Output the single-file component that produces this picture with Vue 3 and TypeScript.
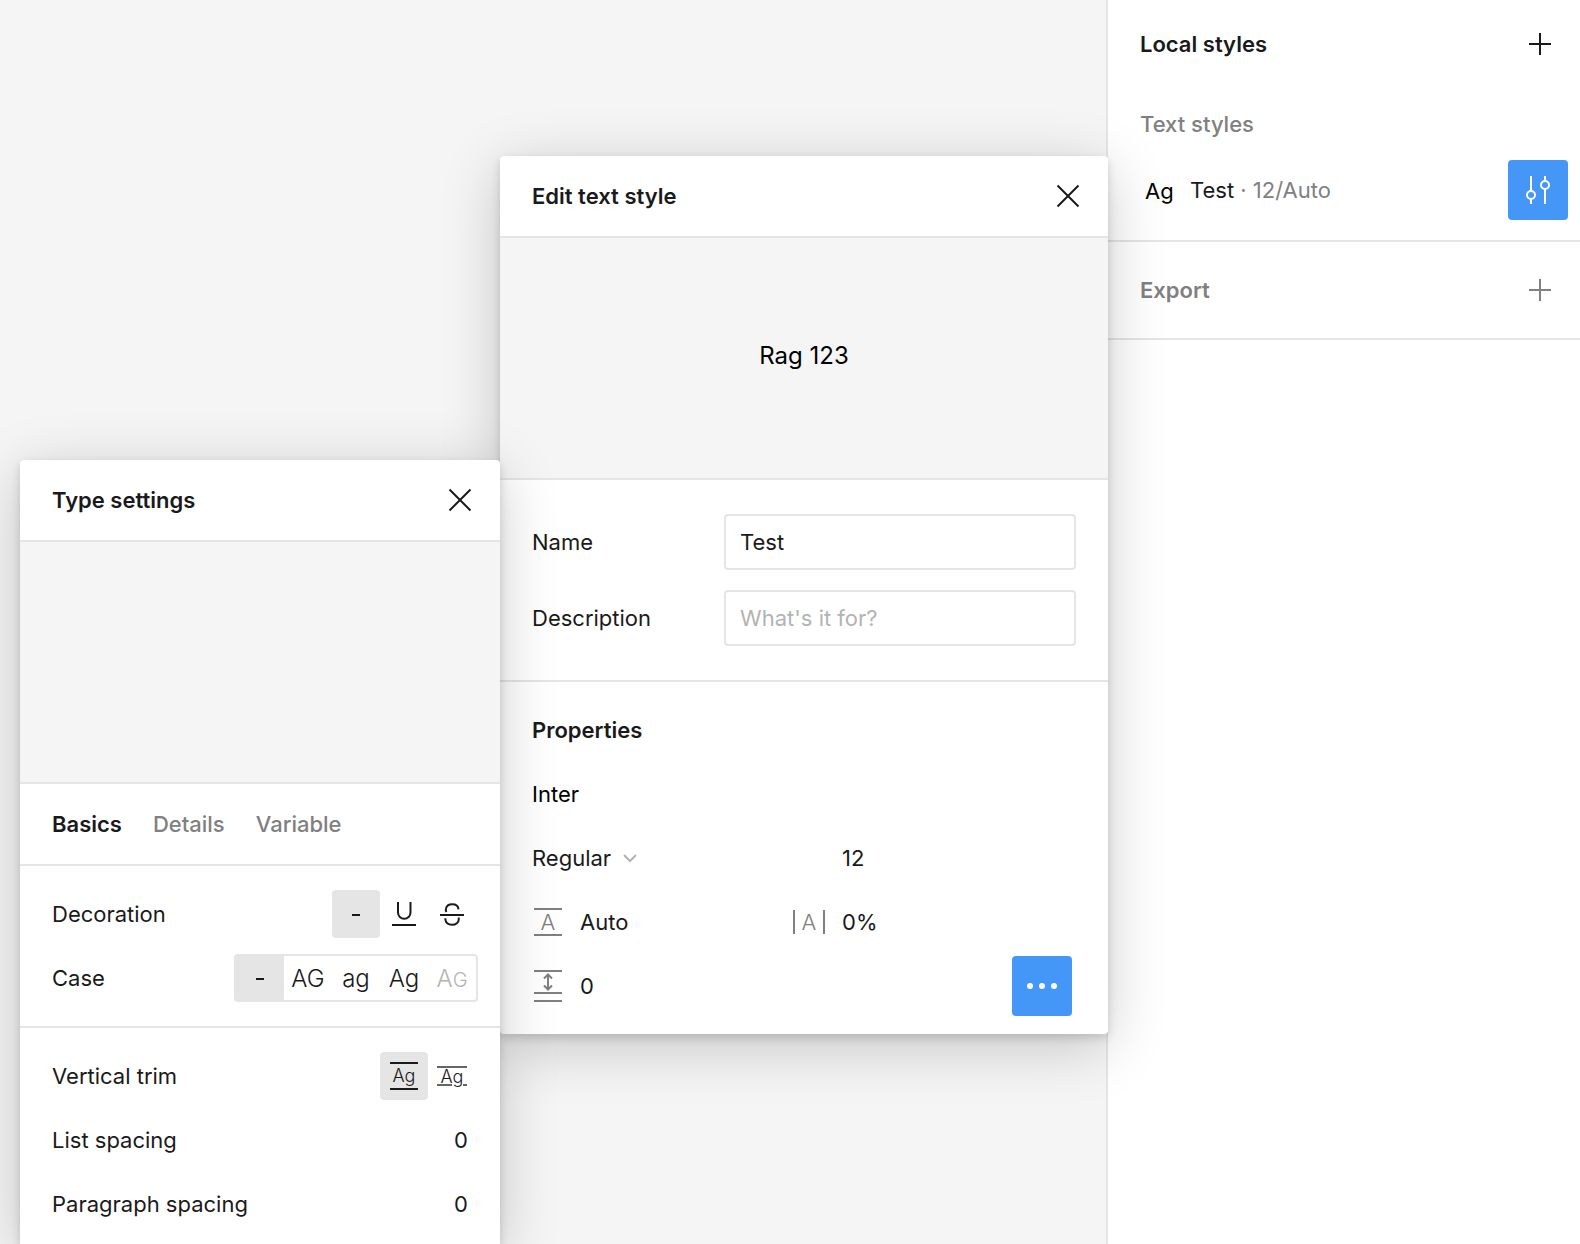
<script setup lang="ts">
import { ref } from 'vue'

type Tab = 'Basics' | 'Details' | 'Variable'

const tabs: Tab[] = ['Basics', 'Details', 'Variable']
const activeTab = ref<Tab>('Basics')

const decoration = ref<'none' | 'underline' | 'strike'>('none')
const textCase = ref<'none' | 'upper' | 'lower' | 'title' | 'small'>('none')
const trim = ref<'standard' | 'cap'>('standard')

const name = ref('Test')
const description = ref('')
const family = ref('Inter')
const weight = ref('Regular')
const size = ref('12')
const lineHeight = ref('Auto')
const letterSpacing = ref('0%')
const paragraphGap = ref('0')
const listSpacing = ref('0')
const paragraphSpacing = ref('0')
</script>

<template>
  <div class="app">
    <main class="canvas"></main>

    <aside class="sidebar">
      <section class="block styles">
        <header class="block-head">
          <h2>Local styles</h2>
          <button class="icon-btn" type="button" aria-label="Create style">
            <svg width="24" height="24" viewBox="0 0 24 24"><path d="M12 1v22M1 12h22" /></svg>
          </button>
        </header>
        <h3 class="sub">Text styles</h3>
        <div class="style-row">
          <span class="sample">Ag</span>
          <span class="style-name">Test <span class="muted">· 12/Auto</span></span>
          <button class="primary" type="button" aria-label="Edit style">
            <svg width="60" height="60" viewBox="0 0 60 60">
              <path d="M23 16v15M23 39v5M37 16v5M37 29v15" />
              <circle cx="23" cy="35" r="4" />
              <circle cx="37" cy="25" r="4" />
            </svg>
          </button>
        </div>
      </section>
      <section class="block export muted">
        <h2>Export</h2>
        <button class="icon-btn" type="button" aria-label="Add export">
          <svg width="24" height="24" viewBox="0 0 24 24"><path d="M12 1v22M1 12h22" /></svg>
        </button>
      </section>
    </aside>

    <section class="panel edit-panel" aria-label="Edit text style">
      <header class="panel-head">
        <h2>Edit text style</h2>
        <button class="icon-btn close" type="button" aria-label="Close">
          <svg width="24" height="24" viewBox="0 0 24 24"><path d="M1.500 1.500l21 21M22.500 1.500l-21 21" /></svg>
        </button>
      </header>
      <div class="preview">Rag 123</div>
      <div class="form">
        <label for="style-name">Name</label>
        <input id="style-name" v-model="name" class="boxed" type="text" />
        <label for="style-desc">Description</label>
        <input id="style-desc" v-model="description" class="boxed" type="text" placeholder="What's it for?" />
      </div>
      <div class="props">
        <h2 class="wide">Properties</h2>
        <input v-model="family" class="plain wide black" type="text" aria-label="Font family" />
        <div class="select-cell">
          <select v-model="weight" aria-label="Font weight">
            <option>Regular</option>
          </select>
          <svg class="chevron" width="16" height="10" viewBox="0 0 16 10"><path d="M2 2l6 6 6-6" /></svg>
        </div>
        <input v-model="size" class="plain" type="text" aria-label="Font size" />

        <svg class="prop-icon" width="32" height="32" viewBox="0 0 32 32">
          <path d="M2 3h28M2 29h28" />
          <text x="16" y="24" text-anchor="middle">A</text>
        </svg>
        <input v-model="lineHeight" class="plain" type="text" aria-label="Line height" />
        <svg class="prop-icon" width="36" height="32" viewBox="0 0 36 32">
          <path d="M4 4v24M34 4v24" />
          <text x="19" y="24" text-anchor="middle">A</text>
        </svg>
        <input v-model="letterSpacing" class="plain" type="text" aria-label="Letter spacing" />

        <svg class="prop-icon" width="32" height="34" viewBox="0 0 32 34">
          <path d="M2 2h28M2 24h28M2 32h28" />
          <path d="M16 6v14M12 9.500l4-4 4 4M12 16.500l4 4 4-4" />
        </svg>
        <input v-model="paragraphGap" class="plain" type="text" aria-label="Paragraph gap" />
        <button class="primary more" type="button" aria-label="Type settings">
          <svg width="60" height="60" viewBox="0 0 60 60">
            <g class="dots">
              <circle cx="18" cy="30" r="3" />
              <circle cx="30" cy="30" r="3" />
              <circle cx="42" cy="30" r="3" />
            </g>
          </svg>
        </button>
      </div>
    </section>

    <section class="panel type-panel" aria-label="Type settings">
      <header class="panel-head">
        <h2>Type settings</h2>
        <button class="icon-btn close" type="button" aria-label="Close">
          <svg width="24" height="24" viewBox="0 0 24 24"><path d="M1.500 1.500l21 21M22.500 1.500l-21 21" /></svg>
        </button>
      </header>
      <div class="preview"></div>
      <nav class="tabs" role="tablist">
        <button
          v-for="tab in tabs"
          :key="tab"
          type="button"
          role="tab"
          :aria-selected="activeTab === tab"
          :class="{ active: activeTab === tab }"
          @click="activeTab = tab"
        >{{ tab }}</button>
      </nav>
      <div class="group">
        <div class="row">
          <span>Decoration</span>
          <div class="toggles">
            <button type="button" aria-label="No decoration" :class="{ on: decoration === 'none' }" @click="decoration = 'none'">
              <svg width="48" height="48" viewBox="0 0 48 48"><path d="M20 25h8" /></svg>
            </button>
            <button type="button" aria-label="Underline" :class="{ on: decoration === 'underline' }" @click="decoration = 'underline'">
              <svg width="48" height="48" viewBox="0 0 48 48">
                <path d="M12 35h24" />
                <path d="M18 12v10.500a6.200 6.200 0 0 0 12.500 0V12" />
              </svg>
            </button>
            <button type="button" aria-label="Strikethrough" :class="{ on: decoration === 'strike' }" @click="decoration = 'strike'">
              <svg width="48" height="48" viewBox="0 0 48 48">
                <path d="M12 25h24" />
                <path d="M18.500 22c-.8-1-.9-2-.6-3.200.6-2.800 3.200-4.500 6.300-4.500 3.400 0 6 1.800 6.300 5" />
                <path d="M17.200 28.200c.3 4.300 3.200 6.600 6.900 6.600s6.800-2.400 6.700-5.700c0-.6-.1-1.100-.3-1.600" />
              </svg>
            </button>
          </div>
        </div>
        <div class="row">
          <span>Case</span>
          <div class="segments">
            <button type="button" aria-label="As typed" :class="{ on: textCase === 'none' }" @click="textCase = 'none'">
              <svg width="48" height="44" viewBox="0 0 48 44"><path d="M20 23h8" /></svg>
            </button>
            <button type="button" :class="{ on: textCase === 'upper' }" @click="textCase = 'upper'">AG</button>
            <button type="button" :class="{ on: textCase === 'lower' }" @click="textCase = 'lower'">ag</button>
            <button type="button" :class="{ on: textCase === 'title' }" @click="textCase = 'title'">Ag</button>
            <button type="button" class="faint" :class="{ on: textCase === 'small' }" @click="textCase = 'small'">A<small>G</small></button>
          </div>
        </div>
      </div>
      <div class="group">
        <div class="row">
          <span>Vertical trim</span>
          <div class="toggles">
            <button type="button" aria-label="Standard" :class="{ on: trim === 'standard' }" @click="trim = 'standard'">
              <svg class="trim" width="48" height="48" viewBox="0 0 48 48">
                <path d="M10 11h28M10 37h28" />
                <text x="24" y="30" text-anchor="middle">Ag</text>
              </svg>
            </button>
            <button type="button" aria-label="Cap height to baseline" :class="{ on: trim === 'cap' }" @click="trim = 'cap'">
              <svg class="trim light" width="48" height="48" viewBox="0 0 48 48">
                <path d="M9 15h30M9 33h15M35 33h4" />
                <text x="24" y="31" text-anchor="middle">Ag</text>
              </svg>
            </button>
          </div>
        </div>
        <div class="row">
          <label for="list-spacing">List spacing</label>
          <input id="list-spacing" v-model="listSpacing" class="plain number" type="text" />
        </div>
        <div class="row">
          <label for="para-spacing">Paragraph spacing</label>
          <input id="para-spacing" v-model="paragraphSpacing" class="plain number" type="text" />
        </div>
      </div>
    </section>
  </div>
</template>

<style>
body {
  margin: 0;
}
</style>

<style scoped>
.app {
  position: relative;
  display: flex;
  height: 100vh;
  overflow: hidden;
  background: #f5f5f5;
  color: #1a1a1a;
  font: 400 22px/32px Inter, "Liberation Sans", sans-serif;
}

.app *,
.app *::before {
  box-sizing: border-box;
}

h2,
h3 {
  margin: 0;
  font-size: 22px;
  font-weight: 600;
}

button,
input,
select {
  margin: 0;
  padding: 0;
  border: 0;
  background: none;
  color: inherit;
  font: inherit;
}

button {
  cursor: pointer;
}

svg {
  display: block;
  flex: none;
  fill: none;
  stroke: currentColor;
  stroke-width: 2;
}

svg text {
  fill: currentColor;
  stroke: none;
  font-weight: 300;
}

.canvas {
  flex: 1;
}

.sidebar {
  width: 30%;
  border-left: 2px solid #e5e5e5;
  background: #fff;
}

.block {
  border-bottom: 2px solid #e5e5e5;
}

.styles {
  padding-bottom: 20px;
}

.block-head,
.export {
  display: flex;
  align-items: center;
  justify-content: space-between;
  height: 88px;
  padding: 0 28px 0 32px;
}

.export {
  height: 98px;
}

.muted {
  color: #808080;
}

.sub {
  padding: 20px 32px;
  color: #808080;
  font-weight: 500;
}

.style-row {
  display: flex;
  align-items: center;
  padding: 0 12px 0 37px;
}

.sample {
  width: 45px;
  color: #000;
  line-height: 34px;
  padding-top: 2px;
}

.style-name {
  flex: 1;
}

.primary {
  border-radius: 4px;
  background: #4597f7;
  color: #fff;
}

.dots {
  fill: currentColor;
  stroke: none;
}

.panel {
  position: absolute;
  border-radius: 4px;
  background: #fff;
  box-shadow: 0 12px 60px rgba(0, 0, 0, 0.2), 0 4px 10px rgba(0, 0, 0, 0.15);
}

.edit-panel {
  top: 156px;
  right: calc(30% - 2px);
  width: 608px;
}

.type-panel {
  top: 460px;
  right: calc(30% + 606px);
  bottom: 0;
  width: 480px;
  border-radius: 4px 4px 0 0;
}

.panel-head {
  display: flex;
  align-items: center;
  justify-content: space-between;
  height: 82px;
  padding: 0 28px 0 32px;
  border-bottom: 2px solid #e5e5e5;
}

.preview {
  display: flex;
  align-items: center;
  justify-content: center;
  height: 242px;
  padding-bottom: 4px;
  border-bottom: 2px solid #e5e5e5;
  background: #f5f5f5;
  color: #000;
  font-size: 24px;
}

.form {
  display: grid;
  grid-template-columns: 192px 1fr;
  gap: 20px 0;
  align-items: center;
  padding: 34px 32px;
  border-bottom: 2px solid #e5e5e5;
}

.boxed {
  width: 100%;
  height: 56px;
  padding: 0 14px;
  border: 2px solid #e5e5e5;
  border-radius: 4px;
}

.boxed::placeholder {
  color: #b3b3b3;
  opacity: 1;
}

.props {
  display: grid;
  grid-template-columns: 48px 210px 52px 1fr;
  grid-auto-rows: 64px;
  align-items: center;
  padding: 16px 36px 16px 32px;
}

.wide {
  grid-column: 1 / -1;
}

.black {
  color: #000;
}

.select-cell {
  display: flex;
  grid-column: 1 / 4;
  align-items: center;
  gap: 10px;
}

.select-cell select {
  appearance: none;
}

.chevron {
  color: #b3b3b3;
}

.plain {
  width: 100%;
}

.prop-icon {
  color: #808080;
}

.more {
  grid-column: 4;
  justify-self: end;
}

.tabs {
  display: flex;
  gap: 31px;
  height: 82px;
  padding: 0 32px;
  border-bottom: 2px solid #e5e5e5;
  color: #808080;
}

.tabs button {
  font-weight: 500;
}

.tabs .active {
  color: #1a1a1a;
  font-weight: 600;
}

.group {
  padding: 16px 24px 16px 32px;
  border-bottom: 2px solid #e5e5e5;
}

.group:last-child {
  border-bottom: 0;
}

.row {
  display: flex;
  align-items: center;
  justify-content: space-between;
  height: 64px;
}

.toggles {
  display: flex;
}

.toggles button {
  border-radius: 4px;
}

.toggles .on,
.segments .on {
  background: #e5e5e5;
}

.segments {
  display: flex;
  margin-right: -2px;
  border: 2px solid #e5e5e5;
  border-radius: 4px;
}

.segments button {
  width: 48px;
  height: 44px;
  padding-top: 2px;
  font-size: 24px;
  font-weight: 300;
}

.segments button:first-child {
  padding-top: 0;
}

.segments small {
  font-size: 20px;
}

.segments .faint {
  color: #b3b3b3;
}

.trim text {
  font-size: 18px;
}

.light path {
  stroke: #666;
}

.number {
  width: 80px;
  padding-right: 8px;
  text-align: right;
}
</style>
